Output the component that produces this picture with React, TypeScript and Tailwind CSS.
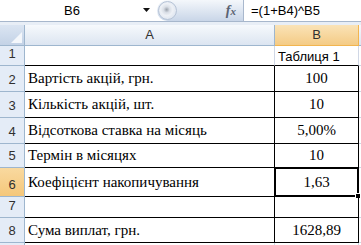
import React from "react";

interface Row {
  n: number;
  h: number;
  a: string;
  b: string;
}

const ROWS: Row[] = [
  { n: 1, h: 20, a: "", b: "Таблиця 1" },
  { n: 2, h: 26, a: "Вартість акцій, грн.", b: "100" },
  { n: 3, h: 26, a: "Кількість акцій, шт.", b: "10" },
  { n: 4, h: 26, a: "Відсоткова ставка на місяць", b: "5,00%" },
  { n: 5, h: 24, a: "Термін в місяцях", b: "10" },
  { n: 6, h: 29, a: "Коефіцієнт накопичування", b: "1,63" },
  { n: 7, h: 21, a: "", b: "" },
  { n: 8, h: 25, a: "Сума виплат, грн.", b: "1628,89" },
  { n: 9, h: 20, a: "", b: "" },
];

const SANS = "font-['Liberation_Sans',Arial,sans-serif]";
const SERIF = "font-['Liberation_Serif','Times_New_Roman',serif]";

function FormulaBar() {
  return (
    <div className={`flex h-[21px] bg-white ${SANS} text-[13px] text-black`}>
      <div className="flex w-[157px] items-center">
        <span className="flex-1 pl-[1px] text-center">B6</span>
        <svg width="8" height="5" viewBox="0 0 8 5" className="mr-[6px]">
          <path d="M0 0h7L3.5 4z" fill="#111" />
        </svg>
      </div>
      <div className="relative flex w-[86px] items-center justify-end rounded-l-full bg-gradient-to-b from-[#f4f7fb] to-[#c9d6e8] pr-[7px]">
        <div className="absolute left-[1px] top-[1px] h-[19px] w-[19px] rounded-full border border-[#b6c3d6] bg-[radial-gradient(circle_at_45%_45%,#9aa1ab_0,#d9dee6_3px,#eef1f6_6px,#e2e8f1_9px)]" />
        <span className={`${SERIF} text-[14px] font-bold italic text-[#5a6271]`}>
          f<span className="text-[11px]">x</span>
        </span>
      </div>
      <div className="flex flex-1 items-center border-l border-[#a9b8cd] pl-[7px]">
        =(1+B4)^B5
      </div>
    </div>
  );
}

function ColumnHeaders() {
  return (
    <div className={`flex h-[21px] ${SANS} text-[13px] text-[#303030]`}>
      <div className="flex w-[25px] items-end justify-end border-r border-b border-[#9eb6ce] bg-gradient-to-b from-[#dbe5f2] to-[#c3d2e6] p-[2px]">
        <svg width="11" height="11" viewBox="0 0 11 11">
          <path d="M11 0v11H0z" fill="#f4f7fb" />
        </svg>
      </div>
      <div className="flex w-[250px] items-center justify-center border-r border-b border-[#9eb6ce] bg-gradient-to-b from-[#f6f9fc] to-[#dce5f1]">
        A
      </div>
      <div className="flex w-[84px] items-center justify-center border-r border-b border-[#f2b54f] bg-gradient-to-b from-[#fae3b7] to-[#f4cb85]">
        B
      </div>
      <div className="flex-1 border-b border-[#9eb6ce] bg-gradient-to-b from-[#f6f9fc] to-[#dce5f1]" />
    </div>
  );
}

function SheetRow({ row }: { row: Row }) {
  const active = row.n === 6;
  const table = row.n >= 1 && row.n <= 8;
  const framed = row.n >= 2 && row.n <= 8;
  return (
    <div className="flex" style={{ height: row.h }}>
      <div
        className={`flex w-[25px] items-end justify-center border-r border-b border-[#9eb6ce] pb-[3px] ${SANS} text-[13px] leading-[16px] text-[#303030] ${
          active ? "bg-gradient-to-b from-[#f9d99f] to-[#f5c77a]" : "bg-[#e4ecf7]"
        }`}
      >
        {row.n <= 8 ? row.n : ""}
      </div>
      <div
        className={`flex w-[250px] items-center border-b border-r pl-[3px] pb-[1px] ${SERIF} text-[15px] leading-[20px] text-black ${
          table ? "border-b-black" : "border-b-[#d0d7e5]"
        } ${framed ? "border-r-black" : "border-r-[#d0d7e5]"}`}
      >
        {row.a}
      </div>
      <div
        className={`relative flex w-[84px] items-center border-b border-r ${
          table ? "border-b-black" : "border-b-[#d0d7e5]"
        } ${framed ? "border-r-black" : "border-r-[#d0d7e5]"} ${
          row.n === 1
            ? `${SANS} pl-[3px] pt-[1px] text-[13px] leading-[17px]`
            : `${SERIF} justify-center pb-[1px] text-[15px] leading-[20px]`
        } text-black`}
      >
        {row.b}
        {active && (
          <div className="absolute -left-[1px] -top-[1px] -right-[1px] -bottom-[1px] border-2 border-black">
            <div className="absolute -bottom-[4px] -right-[4px] h-[6px] w-[6px] border border-white bg-black" />
          </div>
        )}
      </div>
      <div className="flex-1 border-b border-[#d0d7e5]" />
    </div>
  );
}

export default function App() {
  return (
    <div className="h-[245px] w-[361px] overflow-hidden bg-white">
      <FormulaBar />
      <div className="h-[4px] border-t border-[#a7b7cc] bg-[#e8eef6]" />
      <ColumnHeaders />
      {ROWS.map((row) => (
        <SheetRow key={row.n} row={row} />
      ))}
    </div>
  );
}
